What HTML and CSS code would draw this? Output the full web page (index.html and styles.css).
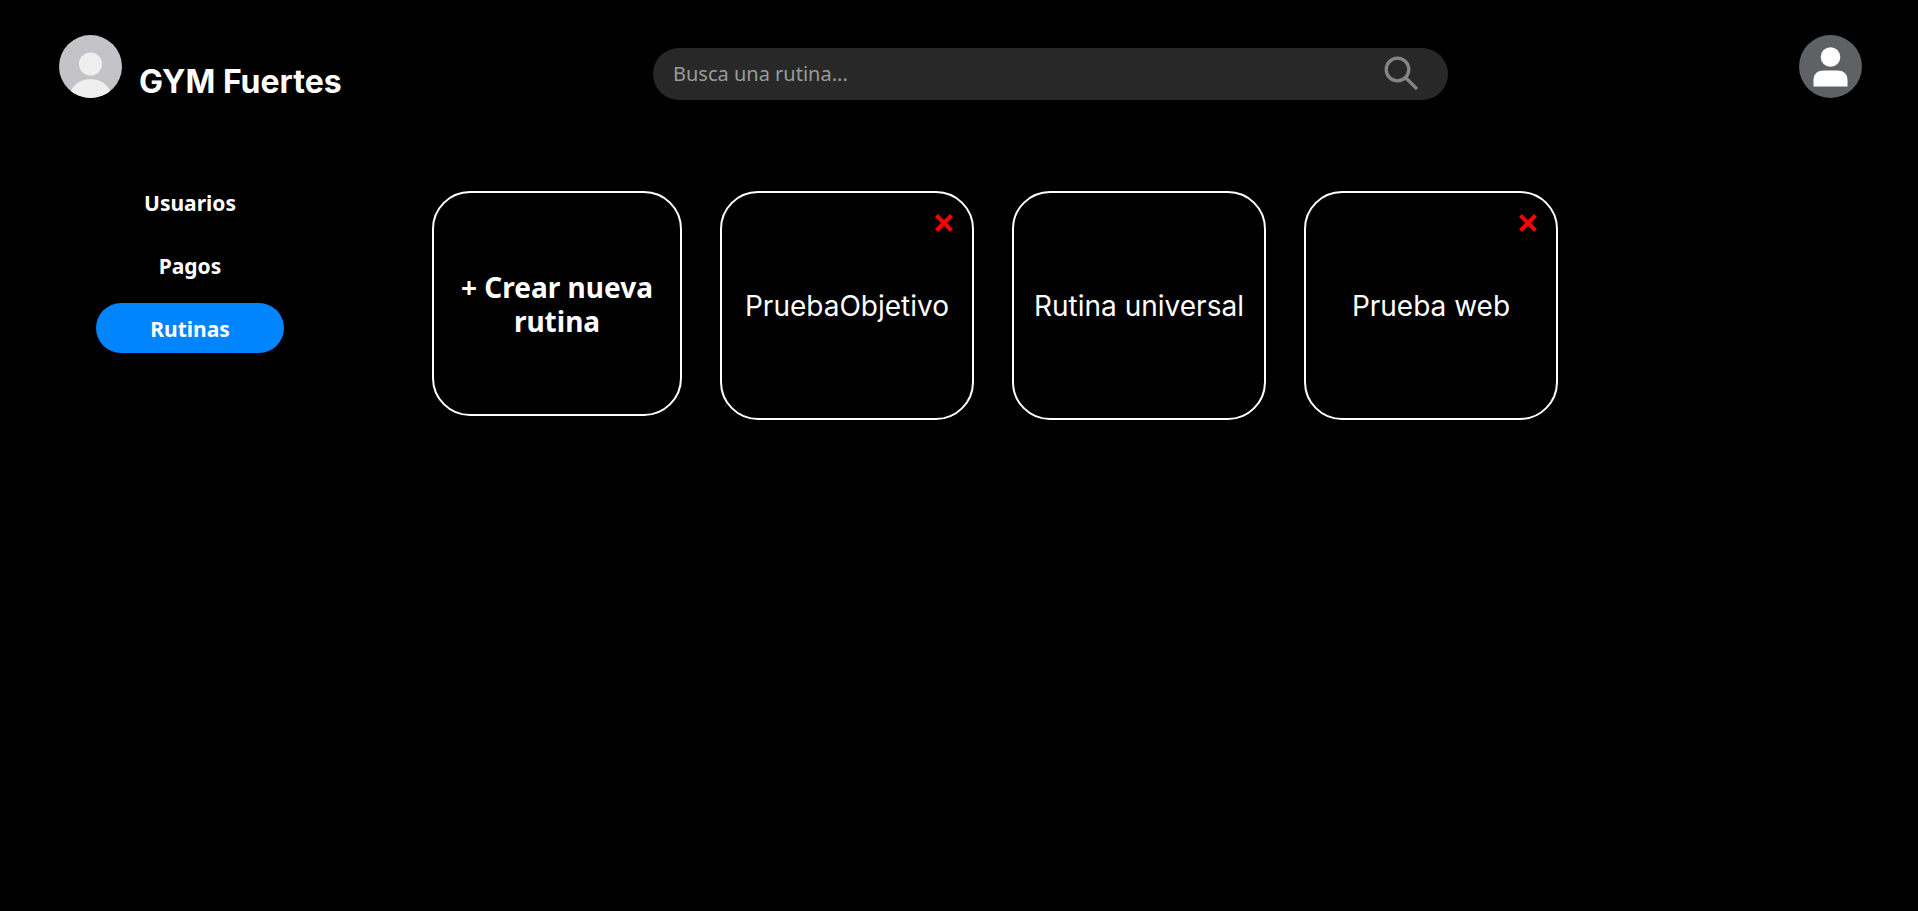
FILE: index.html
```html
<!DOCTYPE html>
<html lang="es">
<head>
<meta charset="utf-8">
<meta name="viewport" content="width=device-width, initial-scale=1">
<title>GYM Fuertes</title>
<link rel="stylesheet" href="styles.css">
</head>
<body>
<header class="header">
  <div class="brand">
    <svg class="avatar" viewBox="0 0 63 63" aria-hidden="true">
      <defs><clipPath id="round"><circle cx="31.500" cy="31.500" r="31.500"/></clipPath></defs>
      <g clip-path="url(#round)">
        <rect width="63" height="63" fill="#c3c3c8"/>
        <circle cx="31.500" cy="29" r="11.500" fill="#efefef"/>
        <ellipse cx="31.500" cy="64" rx="21.500" ry="20" fill="#efefef"/>
      </g>
    </svg>
    <h1 class="brand-name">GYM Fuertes</h1>
  </div>
  <form class="search" role="search">
    <input class="search-input" type="text" placeholder="Busca una rutina..." aria-label="Busca una rutina">
    <button class="search-button" type="button" aria-label="Buscar">
      <svg viewBox="0 0 34 34" width="34" height="34" fill="none" stroke="#858585" stroke-width="3.300">
        <circle cx="13.500" cy="13.500" r="11.300"/>
        <path d="M21.500 21.500L33 33"/>
      </svg>
    </button>
  </form>
  <button class="profile" type="button" aria-label="Perfil">
    <svg class="avatar" viewBox="0 0 63 63">
      <circle cx="31.500" cy="31.500" r="31.500" fill="#5f6265"/>
      <circle cx="31.500" cy="22" r="9.800" fill="#fff"/>
      <path d="M14.500 51.500V45Q14.500 35.500 25 35.500H38Q48.500 35.500 48.500 45V51.500Z" fill="#fff"/>
    </svg>
  </button>
</header>
<div class="layout">
  <nav class="nav" aria-label="Principal">
    <a class="nav-link" href="#usuarios">Usuarios</a>
    <a class="nav-link" href="#pagos">Pagos</a>
    <a class="nav-link nav-link-active" href="#rutinas" aria-current="page">Rutinas</a>
  </nav>
  <main class="routines">
    <button class="create" type="button">+ Crear nueva rutina</button>
    <article class="card">
      <button class="delete" type="button" aria-label="Eliminar PruebaObjetivo">
        <svg viewBox="0 0 18 18" width="18" height="18" stroke="#f00" stroke-width="4"><path d="M1.500 1.500L16.500 16.500M16.500 1.500L1.500 16.500"/></svg>
      </button>
      <a class="card-link" href="#prueba-objetivo">PruebaObjetivo</a>
    </article>
    <article class="card">
      <a class="card-link" href="#rutina-universal">Rutina universal</a>
    </article>
    <article class="card">
      <button class="delete" type="button" aria-label="Eliminar Prueba web">
        <svg viewBox="0 0 18 18" width="18" height="18" stroke="#f00" stroke-width="4"><path d="M1.500 1.500L16.500 16.500M16.500 1.500L1.500 16.500"/></svg>
      </button>
      <a class="card-link" href="#prueba-web">Prueba web</a>
    </article>
  </main>
</div>
</body>
</html>
```
FILE: styles.css
```css
* {
  box-sizing: border-box;
}

body {
  margin: 0;
  background: #000;
  color: #fff;
  font-family: Inter, sans-serif;
}

button {
  padding: 0;
  border: 0;
  background: none;
  color: inherit;
  cursor: pointer;
}

a {
  color: inherit;
  text-decoration: none;
}

svg {
  display: block;
}

.header {
  display: grid;
  grid-template-columns: 594fr 795fr 414fr;
  align-items: start;
  padding: 35px 56px 0 59px;
}

.avatar {
  width: 63px;
  height: 63px;
  flex: none;
}

.brand {
  display: flex;
  gap: 17px;
}

.brand-name {
  margin: 27px 0 0;
  font-size: 32px;
  font-weight: 700;
  line-height: 40px;
  white-space: nowrap;
}

.search {
  display: flex;
  align-items: center;
  height: 52px;
  margin-top: 13px;
  padding: 0 30px 0 20px;
  border-radius: 26px;
  background: #282828;
}

.search-input {
  flex: 1;
  min-width: 0;
  padding: 0;
  border: 0;
  outline: 0;
  background: none;
  color: #fff;
  font: 20px/28px Tahoma, "Noto Sans", sans-serif;
}

.search-input::placeholder {
  color: #9a9a9a;
  opacity: 1;
}

.search-button {
  margin-bottom: 2px;
}

.profile {
  justify-self: end;
}

.layout {
  display: flex;
  align-items: flex-start;
  gap: 148px;
  padding: 75px 56px 40px 96px;
}

.nav {
  display: flex;
  flex: none;
  flex-direction: column;
  gap: 13px;
  width: 188px;
}

.nav-link {
  padding: 12px 16px 10px;
  border-radius: 25px;
  font: bold 21px/28px Tahoma, "Noto Sans", sans-serif;
  text-align: center;
}

.nav-link-active {
  background: #0085ff;
}

.routines {
  display: flex;
  flex: 1;
  flex-wrap: wrap;
  align-items: flex-start;
  gap: 38px;
  padding-top: 14px;
}

.create,
.card {
  border: 2px solid #fff;
  border-radius: 38px;
}

.create {
  width: 250px;
  height: 225px;
  padding: 0 20px;
  font: bold 28px/34px Tahoma, "Noto Sans", sans-serif;
}

.card {
  position: relative;
  display: flex;
  align-items: center;
  justify-content: center;
  width: 254px;
  height: 229px;
}

.card-link {
  font-size: 28px;
  line-height: 34px;
  white-space: nowrap;
}

.delete {
  position: absolute;
  top: 21px;
  right: 19px;
}
```
